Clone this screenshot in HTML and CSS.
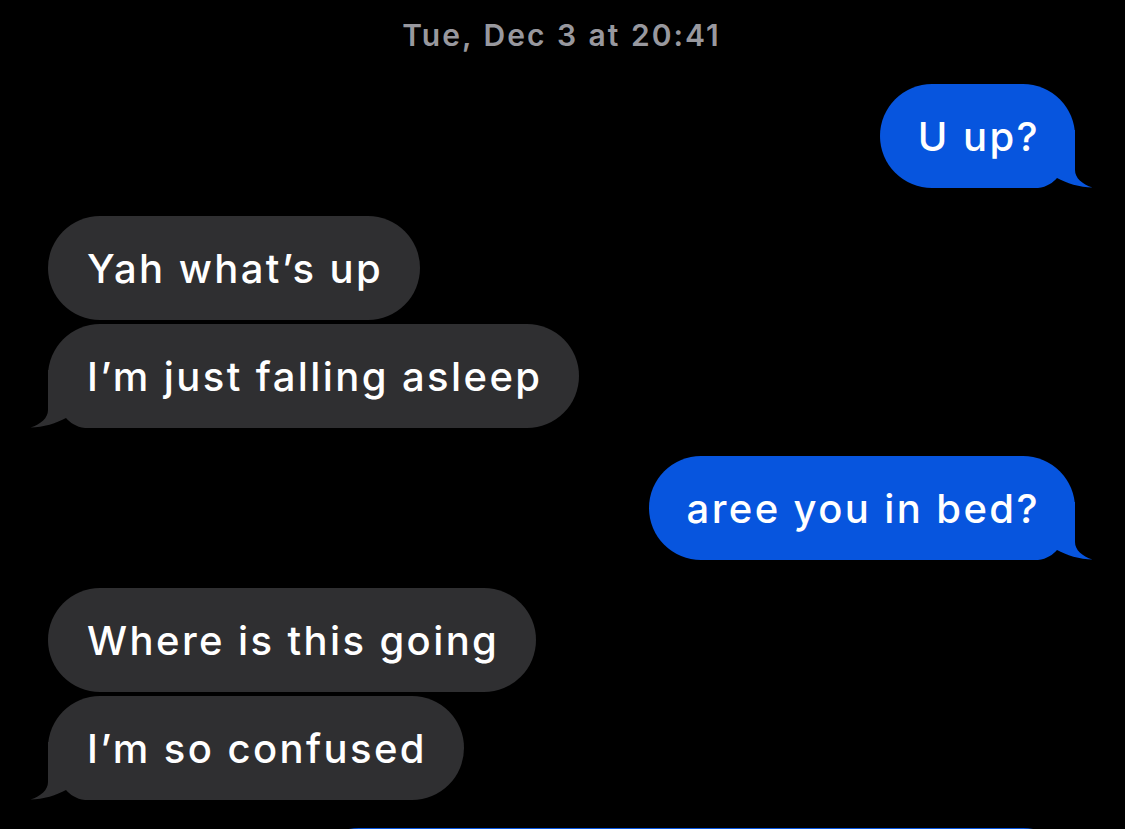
FILE: index.html
```html
<!DOCTYPE html>
<html lang="en">
<head>
<meta charset="utf-8">
<title>Messages</title>
<link rel="stylesheet" href="styles.css">
</head>
<body>
<main class="thread">
  <div class="stamp">Tue, Dec 3 at 20:41</div>

  <div class="group sent">
    <div class="bubble tailed"><span class="text">U up?</span><svg class="tail" viewBox="0 0 76 58" width="76" height="58"><path d="M0 0H55V40C55 48 62 54 72.5 57.6C60 57.5 46 53 37 48C33 52.5 27 57 18 58H0Z"/></svg></div>
  </div>

  <div class="group received">
    <div class="bubble"><span class="text">Yah what’s up</span></div>
    <div class="bubble tailed"><span class="text">I’m just falling asleep</span><svg class="tail" viewBox="0 0 76 58" width="76" height="58"><path d="M0 0H55V40C55 48 62 54 72.5 57.6C60 57.5 46 53 37 48C33 52.5 27 57 18 58H0Z"/></svg></div>
  </div>

  <div class="group sent">
    <div class="bubble tailed"><span class="text">aree you in bed?</span><svg class="tail" viewBox="0 0 76 58" width="76" height="58"><path d="M0 0H55V40C55 48 62 54 72.5 57.6C60 57.5 46 53 37 48C33 52.5 27 57 18 58H0Z"/></svg></div>
  </div>

  <div class="group received">
    <div class="bubble"><span class="text">Where is this going</span></div>
    <div class="bubble tailed"><span class="text">I’m so confused</span><svg class="tail" viewBox="0 0 76 58" width="76" height="58"><path d="M0 0H55V40C55 48 62 54 72.5 57.6C60 57.5 46 53 37 48C33 52.5 27 57 18 58H0Z"/></svg></div>
  </div>

  <div class="group sent">
    <div class="bubble wide"></div>
  </div>
</main>
</body>
</html>
```

FILE: styles.css
```css
html, body {
  margin: 0;
  padding: 0;
  background: #000;
  height: 100%;
  overflow: hidden;
}

body {
  font-family: Inter, "Noto Sans", "Liberation Sans", sans-serif;
  color: #fff;
}

.thread {
  display: flex;
  flex-direction: column;
  gap: 28px;
  padding: 0 50px 0 48px;
}

.stamp {
  text-align: center;
  color: #98989e;
  font-size: 30px;
  font-weight: 600;
  line-height: 36px;
  padding-top: 17px;
  margin-bottom: 3px;
  letter-spacing: 2px;
  word-spacing: 1px;
}

.group {
  display: flex;
  flex-direction: column;
  gap: 4px;
}

.group.sent { align-items: flex-end; }
.group.received { align-items: flex-start; }

.bubble {
  position: relative;
  box-sizing: border-box;
  height: 104px;
  padding: 28px 37px 0 39px;
  border-radius: 52px;
  white-space: nowrap;
  font-size: 40px;
  font-weight: 500;
  line-height: normal;
}

.text {
  position: relative;
  z-index: 1;
  letter-spacing: 2.4px;
}

.sent .bubble { background: #0755de; padding: 28px 35px 0 38px; }
.received .bubble { background: #2f2f31; }

.bubble.wide { width: 768px; }

.tail {
  position: absolute;
  bottom: 0;
  display: block;
  z-index: 0;
}

.sent .tail {
  right: -21px;
  fill: #0755de;
}

.received .tail {
  left: -21px;
  fill: #2f2f31;
  transform: scaleX(-1);
}
```
